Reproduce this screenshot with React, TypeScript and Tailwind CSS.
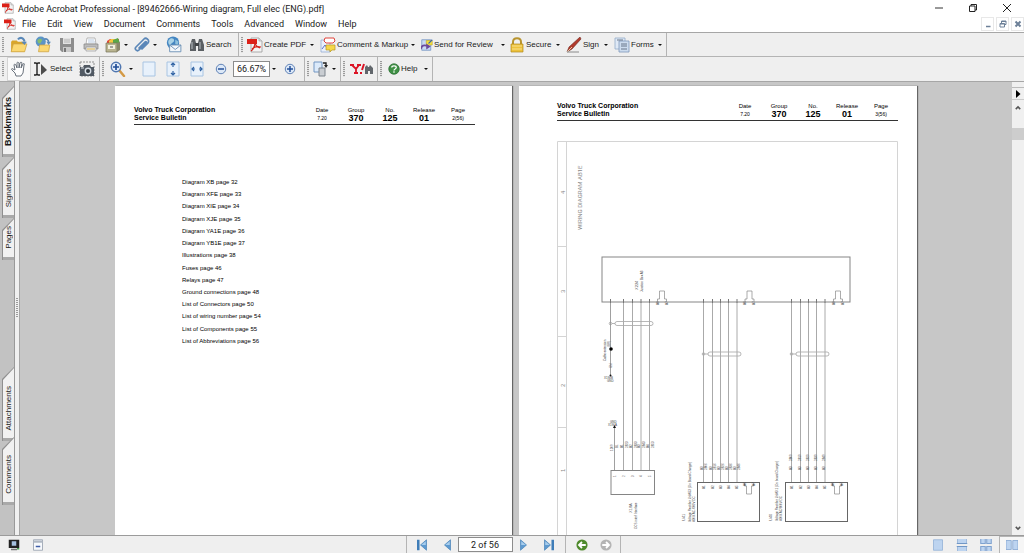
import type { ReactNode } from "react";

type IconProps = { className?: string; children: ReactNode };

function Icon({ className = "h-4 w-4", children }: IconProps) {
  return (
    <svg viewBox="0 0 16 16" className={`shrink-0 ${className}`} fill="none" aria-hidden="true">
      {children}
    </svg>
  );
}

/* ---------- icons ---------- */

function AcrobatIcon({ className = "h-4 w-4" }: { className?: string }) {
  return (
    <Icon className={className}>
      <path d="M4 1h8l3 3v11H4z" fill="#f4f4f4" stroke="#9a9a9a" strokeWidth="0.8" />
      <path d="M12 1v3h3" fill="#ddd" stroke="#9a9a9a" strokeWidth="0.6" />
      <path d="M0 2h10v5H0z" fill="#dc2018" />
      <path d="M4 14c2-1 4-5 4-9M8 5c0 3 2 5 5 6M5 12c2-2 5-3 9-2" stroke="#d3241c" strokeWidth="1.2" />
    </Icon>
  );
}

function OpenIcon() {
  return (
    <Icon className="h-[18px] w-[18px]">
      <path d="M1 5l1-1h4l1 1h6v9H1z" fill="#d9a62a" />
      <path d="M1 14L3 7h12l-2 7z" fill="#fbd872" stroke="#cfa544" strokeWidth="0.7" />
      <path d="M7 3c2-2 5-2 6 2" stroke="#5a88b8" strokeWidth="1.8" />
      <path d="M10 5h5l-2 3z" fill="#5a88b8" />
    </Icon>
  );
}

function OpenWebIcon() {
  return (
    <Icon className="h-[18px] w-[18px]">
      <circle cx="6" cy="5" r="4.5" fill="#5c94c6" />
      <path d="M3 4c1-2 3-2 4-1s-1 2-1 3-3 1-3-2z" fill="#86bd6f" />
      <path d="M4 14l1-6h9l-1 6z" fill="#fbd872" stroke="#cfa544" strokeWidth="0.7" />
      <path d="M9 3c2-1 4 0 4 3" stroke="#5a88b8" strokeWidth="1.5" />
      <path d="M11 5h4l-2 3z" fill="#5a88b8" />
    </Icon>
  );
}

function SaveIcon() {
  return (
    <Icon>
      <path d="M1 1h14v14H3l-2-2z" fill="#8d8d8d" />
      <path d="M4 1h8v6H4z" fill="#e2e2e2" />
      <path d="M5 3h6M5 5h6" stroke="#a9a9a9" strokeWidth="0.8" />
      <path d="M4 10h8v5H4z" fill="#c9c9c9" />
      <path d="M5 11h2v4H5z" fill="#777" />
    </Icon>
  );
}

function PrintIcon() {
  return (
    <Icon>
      <path d="M4 1h8l1 6H3z" fill="#fff" stroke="#9c9c9c" strokeWidth="0.7" />
      <path d="M5 3h6M5 5h7" stroke="#9ab3d1" strokeWidth="0.7" />
      <path d="M1 7h14v5H1z" fill="#bcbcbc" stroke="#858585" strokeWidth="0.7" />
      <path d="M3 10h10v4H3z" fill="#eee" stroke="#8b8b8b" strokeWidth="0.6" />
      <path d="M4 12h8" stroke="#e0b545" />
    </Icon>
  );
}

function OrganizerIcon() {
  return (
    <Icon>
      <path d="M2 4l3-2h9v4H2z" fill="#e1493a" />
      <path d="M4 4l2-2h6v4H4z" fill="#f3c83f" />
      <path d="M8 3l5-2 2 5H8z" fill="#5ba748" />
      <path d="M1 6h11v9H1z" fill="#b9b490" stroke="#77745a" strokeWidth="0.7" />
      <path d="M12 6l3-1v8l-3 2z" fill="#8b876b" />
      <path d="M3 8h7v4H3z" fill="#f2f0df" />
      <path d="M5 10h3" stroke="#555" />
    </Icon>
  );
}

function ClipIcon() {
  return (
    <Icon>
      <path
        d="M5 11l6-6c1-1 2 0 1 1l-7 7c-2 2-5-1-3-3l8-8c2-2 6 1 4 4l-6 6"
        stroke="#5b87b8"
        strokeWidth="1.7"
        strokeLinecap="round"
      />
    </Icon>
  );
}

function MailWebIcon() {
  return (
    <Icon className="h-[18px] w-[18px]">
      <circle cx="8" cy="6" r="5.5" fill="#4486c2" />
      <path d="M4 4c2-3 5-2 5 0S6 6 6 8 3 7 4 4z" fill="#a9d2e6" />
      <path d="M10 3l3 2-1 3-2-1z" fill="#8ec1dd" />
      <path d="M5 8h10v6H5z" fill="#f3f7fb" stroke="#6a8fb4" strokeWidth="0.8" />
      <path d="M5 8l5 4 5-4" stroke="#6a8fb4" strokeWidth="0.8" />
    </Icon>
  );
}

function BinocularsIcon() {
  return (
    <Icon>
      <path d="M3 2h3l1 4v8H1V8z" fill="#5b5f63" />
      <path d="M10 2h3l2 6v6H9V6z" fill="#5b5f63" />
      <path d="M6 6h4v3H6z" fill="#3f4245" />
      <path d="M3 5v7M11 5v7" stroke="#aab0b5" strokeWidth="1.2" />
    </Icon>
  );
}

function CommentIcon() {
  return (
    <Icon>
      <path d="M1 3h9v12H1z" fill="#e9f0fb" stroke="#8aa5d0" strokeWidth="0.7" />
      <path d="M2 12l3-4 2 3 2-2" stroke="#5a6fd0" />
      <path d="M5 1h9l1 3-2 2H6L4 4z" fill="#fff" stroke="#e0443c" />
      <path d="M6 8h9v5h-3l-2 2v-2H6z" fill="#f6d84a" stroke="#b99a23" strokeWidth="0.7" />
    </Icon>
  );
}

function ReviewIcon() {
  return (
    <Icon className="h-3 w-3">
      <path d="M1 1h12v14H1z" fill="#c9daf3" stroke="#6d8fc0" />
      <path d="M7 2h8v6h-4l-3 3V8H7z" fill="#f4df3c" stroke="#b39b21" strokeWidth="0.7" />
      <path d="M0 13c1-5 4-5 8-4" stroke="#6b4a9c" strokeWidth="2.4" />
      <path d="M7 6l6 4-6 4z" fill="#6b4a9c" />
      <path d="M15 1l-5 5" stroke="#3c68b1" strokeWidth="1.5" />
    </Icon>
  );
}

function LockIcon() {
  return (
    <Icon>
      <path d="M4 8V5c0-5 8-5 8 0v3" stroke="#b8942f" strokeWidth="2" />
      <path d="M2 7h12v8H2z" fill="#edc23c" stroke="#b28a1c" strokeWidth="0.7" />
      <path d="M3 9h10M3 12h10" stroke="#f9e08a" />
    </Icon>
  );
}

function PenIcon() {
  return (
    <Icon>
      <path d="M1 15l2-5L14 0l1 2-9 10z" fill="#b23a2c" stroke="#6f2a21" strokeWidth="0.6" />
      <path d="M1 15l5-5" stroke="#e7c9a5" />
      <path d="M1 15h12" stroke="#8a8a8a" />
    </Icon>
  );
}

function FormsIcon() {
  return (
    <Icon>
      <path d="M1 1h10v11H1z" fill="#dfe9f6" stroke="#93abc9" strokeWidth="0.8" />
      <path d="M5 4h10v11H5z" fill="#cddcee" stroke="#7d97ba" strokeWidth="0.8" />
      <path d="M3 3h6M7 7h6M7 9h6M7 12h6" stroke="#68768a" />
    </Icon>
  );
}

function HandIcon() {
  return (
    <Icon>
      <path
        d="M5 15l-1-3-3-3c-1-1 0-2 1-1l2 1-1-5c0-1 1-1 2 0l1 3V2c0-1 1-1 2 0v5l1-5c0-1 2-1 2 0l-1 5 2-4c1-1 2 0 1 1l-1 8-2 3z"
        fill="#fff"
        stroke="#59626d"
        strokeWidth="0.9"
      />
    </Icon>
  );
}

function SelectIcon() {
  return (
    <Icon>
      <path d="M1 2h2l1 1 1-1h2M4 3v10M1 14h2l1-1 1 1h2" stroke="#222" strokeWidth="1.4" />
      <path d="M8 3v11l6-5z" fill="#4d4d4d" />
    </Icon>
  );
}

function CameraIcon() {
  return (
    <Icon>
      <path d="M1 1h14v14H1z" stroke="#777" strokeDasharray="2 1" strokeWidth="0.8" />
      <path d="M1 6h3l1-2h6l1 2h3v9H1z" fill="#515963" />
      <circle cx="9" cy="10" r="3.4" fill="#d6dde4" />
      <circle cx="9" cy="10" r="2" fill="#2f373f" />
      <path d="M2 7h3" stroke="#dfe3e8" />
    </Icon>
  );
}

function ZoomIcon() {
  return (
    <Icon>
      <path d="M9 9l5 6" stroke="#d49a45" strokeWidth="2.5" strokeLinecap="round" />
      <circle cx="6" cy="6" r="4.7" fill="#e4eefb" stroke="#4f76b0" strokeWidth="1.5" />
      <path d="M6 3v6M3 6h6" stroke="#234f98" strokeWidth="1.7" />
    </Icon>
  );
}

function FitIcon({ kind }: { kind: "page" | "height" | "width" }) {
  return (
    <Icon>
      <path d="M2 1h12v14H2z" fill="#e8f1fb" stroke="#a8c4e2" />
      {kind === "height" ? <path d="M8 2v4M8 14v-4M6 4l2-2 2 2M6 12l2 2 2-2" stroke="#2f62a3" strokeWidth="1.2" /> : null}
      {kind === "width" ? <path d="M3 8h3M13 8h-3M5 6L3 8l2 2M11 6l2 2-2 2" stroke="#2f62a3" strokeWidth="1.2" /> : null}
    </Icon>
  );
}

function RoundIcon({ plus = false }: { plus?: boolean }) {
  return (
    <Icon className="h-3 w-3">
      <circle cx="8" cy="8" r="6.3" fill="#dce8f7" stroke="#5d80b4" strokeWidth="1.3" />
      <path d={plus ? "M8 4v8M4 8h8" : "M4 8h8"} stroke="#24509a" strokeWidth="2" />
    </Icon>
  );
}

function RotateIcon() {
  return (
    <Icon>
      <path d="M1 1h8v10H1z" fill="#dceafa" stroke="#7396c2" />
      <path d="M6 7h6v8H6z" fill="#c9cdd2" stroke="#7c848d" />
      <path d="M10 2h3v2" stroke="#222" strokeWidth="1.4" />
      <path d="M11 4h4l-2 3z" fill="#222" />
    </Icon>
  );
}

function YahooIcon() {
  return (
    <svg viewBox="0 0 24 12" className="h-3 w-6" fill="none" aria-hidden="true">
      <path d="M0 2h4M7 2h4M2 2l4 4 3-4M6 6v4M4 10h4" stroke="#db1426" strokeWidth="1.8" />
      <path d="M14 1l-2 6M11 9v2" stroke="#db1426" strokeWidth="2" />
      <path d="M15 4l2-2 1 2h1l1-2 3 3v6h-3V8h-2v3h-3z" fill="#62676c" />
    </svg>
  );
}

function HelpIcon() {
  return (
    <Icon className="h-3 w-3">
      <circle cx="8" cy="8" r="7" fill="#3f9145" stroke="#2a6d32" />
      <path d="M5 6c0-3 6-3 6 0 0 2-3 2-3 4M8 11v2" stroke="#fff" strokeWidth="1.7" />
    </Icon>
  );
}

function Caret() {
  return (
    <svg viewBox="0 0 4 2" className="h-0.5 w-1 shrink-0" aria-hidden="true">
      <path d="M0 0h4L2 2z" fill="#111" />
    </svg>
  );
}

/* ---------- toolbars ---------- */

function Grip() {
  return <span className="mx-0.5 h-4 w-0.5 shrink-0 bg-[repeating-linear-gradient(#9b9b9b_0_1px,#e4e4e4_1px_2px)]" />;
}

function Divider() {
  return <span className="h-full w-px shrink-0 bg-[#b4b4b4]" />;
}

type ToolProps = { label: string; icon: ReactNode; text?: boolean; caret?: boolean; className?: string };

function Tool({ label, icon, text = false, caret = false, className = "w-6" }: ToolProps) {
  return (
    <button
      type="button"
      aria-label={label}
      className={`flex h-full shrink-0 items-center whitespace-nowrap ${text || caret ? "gap-px" : "justify-center"} ${className}`}
    >
      {icon}
      {text ? <span>{label}</span> : null}
      {caret ? (
        <span className="ml-auto flex">
          <Caret />
        </span>
      ) : null}
    </button>
  );
}

function FileToolbar() {
  return (
    <div className="flex h-6 items-center border-b border-[#b4b4b4]">
      <div className="flex h-full items-center">
        <Grip />
        <Tool label="Open" icon={<OpenIcon />} className="ml-px w-6" />
        <Tool label="Open web page" icon={<OpenWebIcon />} />
        <Tool label="Save" icon={<SaveIcon />} />
        <Tool label="Print" icon={<PrintIcon />} />
        <Tool label="Organizer" icon={<OrganizerIcon />} caret className="ml-0.5 w-[23px]" />
        <Tool label="Attach" icon={<ClipIcon />} caret className="ml-1.5 w-[23px]" />
        <Tool label="Email" icon={<MailWebIcon />} className="ml-1 w-6" />
        <Tool label="Search" icon={<BinocularsIcon />} text className="ml-1 w-[49px]" />
      </div>
      <Divider />
      <Grip />
      <Tool label="Create PDF" icon={<AcrobatIcon />} text caret className="ml-0.5 w-[67px]" />
      <Tool label="Comment & Markup" icon={<CommentIcon />} text caret className="ml-1.5 w-[95px]" />
      <Tool label="Send for Review" icon={<ReviewIcon />} text caret className="ml-1.5 w-[84px]" />
      <Tool label="Secure" icon={<LockIcon />} text caret className="ml-1 w-[51px]" />
      <Tool label="Sign" icon={<PenIcon />} text caret className="ml-1.5 w-[42px]" />
      <Tool label="Forms" icon={<FormsIcon />} text caret className="ml-1.5 mr-1 w-12" />
      <Divider />
    </div>
  );
}

function ViewToolbar() {
  return (
    <div className="flex h-6 items-center">
      <Grip />
      <Tool label="Hand" icon={<HandIcon />} className="mx-px w-6 border border-[#d4d4d4] bg-[#f9f9f9]" />
      <Tool label="Select" icon={<SelectIcon />} text className="ml-px w-[42px]" />
      <Tool label="Snapshot" icon={<CameraIcon />} />
      <Divider />
      <Grip />
      <Tool label="Zoom in tool" icon={<ZoomIcon />} caret className="ml-1 mr-1 w-[23px]" />
      <Tool label="Actual size" icon={<FitIcon kind="page" />} />
      <Tool label="Fit page" icon={<FitIcon kind="height" />} />
      <Tool label="Fit width" icon={<FitIcon kind="width" />} />
      <Tool label="Zoom out" icon={<RoundIcon />} />
      <input
        aria-label="Zoom"
        defaultValue="66.67%"
        className="h-4 w-[37px] border border-[#8c8c8c] bg-white text-center font-['Roboto',sans-serif] text-[9px] outline-none"
      />
      <Tool label="Zoom presets" icon={<Caret />} className="w-2" />
      <Tool label="Zoom in" icon={<RoundIcon plus />} className="mr-0.5 w-6" />
      <Divider />
      <Grip />
      <Tool label="Rotate" icon={<RotateIcon />} caret className="ml-0.5 mr-1 w-[23px]" />
      <Divider />
      <Grip />
      <Tool label="Search Yahoo" icon={<YahooIcon />} className="w-[30px]" />
      <Divider />
      <Grip />
      <Tool label="Help" icon={<HelpIcon />} text caret className="ml-1 mr-1 w-10" />
      <Divider />
    </div>
  );
}

/* ---------- title + menu ---------- */

const MENUS = ["File", "Edit", "View", "Document", "Comments", "Tools", "Advanced", "Window", "Help"];

function TitleBar() {
  return (
    <header className="bg-white font-['Roboto',sans-serif]">
      <div className="flex h-4 items-center pl-0.5">
        <AcrobatIcon className="h-3 w-3" />
        <h1 className="ml-1 whitespace-nowrap pt-0.5 text-[9px] leading-4">
          Adobe Acrobat Professional - [89462666-Wiring diagram, Full elec (ENG).pdf]
        </h1>
        <div className="ml-auto flex">
          <button type="button" aria-label="Minimize" className="flex h-4 w-[34px] items-center justify-center">
            <Icon className="h-2 w-2">
              <path d="M0 8h16" stroke="#333" strokeWidth="2" />
            </Icon>
          </button>
          <button type="button" aria-label="Restore" className="flex h-4 w-[34px] items-center justify-center">
            <Icon className="h-2 w-2">
              <path d="M1 4h11v11H1zM4 4V1h11v11h-3" stroke="#222" strokeWidth="2" />
            </Icon>
          </button>
          <button type="button" aria-label="Close" className="flex h-4 w-[34px] items-center justify-center">
            <Icon className="h-2 w-2">
              <path d="M0 0l16 16M16 0L0 16" stroke="#222" strokeWidth="2" />
            </Icon>
          </button>
        </div>
      </div>
      <div className="flex h-4 items-center pl-1">
        <AcrobatIcon className="h-3 w-3" />
        <nav className="ml-1.5 flex gap-[11px] text-[9px] leading-4">
          {MENUS.map((menu) => (
            <button key={menu} type="button">
              {menu}
            </button>
          ))}
        </nav>
        <div className="ml-auto flex gap-0.5">
          <button type="button" aria-label="Minimize document" className="flex h-3.5 w-[13px] items-center justify-center border border-[#e8e8e8]">
            <Icon className="h-2 w-2">
              <path d="M4 13h9" stroke="#6d8098" strokeWidth="3" />
            </Icon>
          </button>
          <button type="button" aria-label="Restore document" className="flex h-3.5 w-[13px] items-center justify-center border border-[#e8e8e8]">
            <Icon className="h-2 w-2">
              <path d="M2 7h9v7H2zM5 6V2h9v7h-3M2 8h9M5 3h9" stroke="#6d8098" strokeWidth="2" />
            </Icon>
          </button>
          <button type="button" aria-label="Close document" className="flex h-3.5 w-[13px] items-center justify-center border border-[#e8e8e8]">
            <Icon className="h-2 w-2">
              <path d="M3 3l10 10M13 3L3 13" stroke="#6d8098" strokeWidth="4" />
            </Icon>
          </button>
        </div>
      </div>
    </header>
  );
}

/* ---------- side tabs ---------- */

type SideTabProps = { label: string; className: string };

function SideTab({ label, className }: SideTabProps) {
  return (
    <button
      type="button"
      className={`flex w-3 shrink-0 bg-[#8f8f8f] pl-px pt-px [clip-path:polygon(0_12px,100%_0,100%_100%,0_100%)] ${className}`}
    >
      <span className="flex h-full w-full flex-col items-center bg-[#f1f1f1] [clip-path:polygon(0_12px,100%_0,100%_100%,0_100%)]">
        <span className="mt-auto mb-2 rotate-180 leading-[11px] [writing-mode:vertical-rl]">{label}</span>
        <span className="h-[3px] w-full bg-[#a9a9a9]" />
      </span>
    </button>
  );
}

function SideTabs() {
  return (
    <aside className="flex w-3.5 shrink-0 flex-col border-t border-[#aaa] bg-[#c2c2c2] pl-0.5 pt-1 pb-[30px] text-[8px]">
      <SideTab label="Bookmarks" className="h-[71px] text-[9px] font-bold" />
      <SideTab label="Signatures" className="h-[61px]" />
      <SideTab label="Pages" className="h-[42px]" />
      <SideTab label="Attachments" className="mt-auto h-[74px]" />
      <SideTab label="Comments" className="-mt-1 h-[68px]" />
    </aside>
  );
}

/* ---------- document ---------- */

const CONTENTS = [
  "Diagram XB page 32",
  "Diagram XFE page 33",
  "Diagram XIE page 34",
  "Diagram XJE page 35",
  "Diagram YA1E page 36",
  "Diagram YB1E page 37",
  "Illustrations page 38",
  "Fuses page 46",
  "Relays page 47",
  "Ground connections page 48",
  "List of Connectors page 50",
  "List of wiring number page 54",
  "List of Components page 55",
  "List of Abbreviations page 56",
];

function BulletinHeader({ page }: { page: string }) {
  const columns = [
    { name: "Date", value: "7.20", big: false },
    { name: "Group", value: "370", big: true },
    { name: "No.", value: "125", big: true },
    { name: "Release", value: "01", big: true },
    { name: "Page", value: page, big: false },
  ];

  return (
    <div className="flex justify-between border-b border-[#333] pb-0.5">
      <div className="text-[7px] font-bold leading-2">
        Volvo Truck Corporation
        <br />
        Service Bulletin
      </div>
      <div className="flex">
        {columns.map((column) => (
          <div key={column.name} className="w-[34px] text-center">
            <div className="text-[6px] leading-2">{column.name}</div>
            <div className={column.big ? "text-[9px] font-bold leading-2" : "text-[5px] leading-2"}>{column.value}</div>
          </div>
        ))}
      </div>
    </div>
  );
}

type VTextProps = { x: number; y: number; size?: number; fill?: string; children: string };

// text that reads upwards, (x, y) is the start of the baseline
function VText({ x, y, size = 3, fill = "#777", children }: VTextProps) {
  return (
    <text transform={`translate(${x} ${y}) rotate(-90)`} fontSize={size} fill={fill}>
      {children}
    </text>
  );
}

function Plug({ x, y, down = false }: { x: number; y: number; down?: boolean }) {
  const d = down
    ? `M${x - 2} ${y}v3h2v8h5v-8h2v-3`
    : `M${x - 2} ${y}v-3h2v-8h5v8h2v3`;
  return (
    <g>
      <path d={d} stroke="#888" strokeWidth="0.7" />
      <VText x={x - 1} y={y + 3} fill="#333">A6</VText>
      <VText x={x + 8} y={y + 3} fill="#333">A7</VText>
    </g>
  );
}

function Shield({ x, y, width }: { x: number; y: number; width: number }) {
  return (
    <g stroke="#999" strokeWidth="0.7">
      <circle cx={x} cy={y} r="1.3" fill="#fff" />
      <path d={`M${x + 1.5} ${y}h3`} />
      <rect x={x + 4.5} y={y - 2} width={width} height="4" rx="2" />
    </g>
  );
}

const WIRES_A = [623.5, 632.5, 641, 649.5];
const WIRES_B = [703.5, 712.5, 720.5, 728.5, 737];
const WIRES_C = [791.5, 800.5, 808.5, 816.5, 825];

function WiringDiagram() {
  return (
    <svg
      viewBox="557 140 342 396"
      className="mt-5 h-[396px] w-[342px] font-['Liberation_Sans',sans-serif]"
      fill="none"
      role="img"
      aria-label="Wiring diagram AB1E"
    >
      <path d="M557.5 540V140.5h340V540M566.5 140v400M557 245.5h9M557 335.5h9M557 426.5h9" stroke="#d4d4d4" />
      <VText x={565} y={193} size={6} fill="#888">4</VText>
      <VText x={565} y={292} size={6} fill="#888">3</VText>
      <VText x={565} y={386} size={6} fill="#888">2</VText>
      <VText x={565} y={471} size={6} fill="#888">1</VText>
      <g className="font-['Roboto',sans-serif]">
        <VText x={582} y={229} size={6} fill="#888">WIRING DIAGRAM AB1E</VText>
      </g>

      {/* junction box */}
      <rect x="602" y="256" width="248" height="45" stroke="#858585" />
      <VText x={638} y={289} size={4} fill="#555">X224</VText>
      <VText x={643} y={291} fill="#333">Junction Box A3</VText>
      <Plug x={659.5} y={301} />
      <Plug x={747} y={301} />
      <Plug x={835.5} y={301} />

      <Shield x={610.5} y={322.5} width={38} />
      <Shield x={703.5} y={353} width={33} />
      <Shield x={791.5} y={353} width={33} />

      <path d="M610.5 301v73M614.5 426v43" stroke="#888" strokeWidth="0.8" />
      <circle cx="611" cy="348" r="1.8" fill="#000" />
      <circle cx="610.5" cy="374.5" r="1" fill="#111" />
      <path d="M613 427h3l-1.5-3z" fill="#111" />
      <VText x={605.5} y={360} fill="#333">Cable extension</VText>
      <VText x={610} y={346} fill="#555">(BR)</VText>
      <VText x={612} y={367} fill="#555">GN</VText>
      <text x="604" y="378" fontSize="3" fill="#444">X190B</text>
      <text x="607" y="381" fontSize="3" fill="#444">GND</text>
      <text x="610" y="422" fontSize="3" fill="#444">GND</text>
      <text x="608" y="425" fontSize="3" fill="#444">X190A</text>

      {WIRES_A.map((x, index) => (
        <g key={x}>
          <path d={`M${x} 301v168`} stroke="#aaa" />
          <VText x={x - 1} y={447} fill="#444">{`A${index + 1}`}</VText>
          <VText x={x + 4} y={447} fill="#444">{`28${index + 2}3`}</VText>
          <VText x={x + 1} y={476} fill="#555">{`${index + 2}`}</VText>
        </g>
      ))}
      {WIRES_B.map((x, index) => (
        <g key={x}>
          <path d={`M${x} 301v180`} stroke="#aaa" />
          <VText x={x - 1} y={469} fill="#444">A3</VText>
          <VText x={x + 3} y={469} fill="#444">{`28${index}6`}</VText>
          <VText x={x + 1} y={488} fill="#444">{`A${index + 1}`}</VText>
        </g>
      ))}
      {WIRES_C.map((x, index) => (
        <g key={x}>
          <path d={`M${x} 301v180`} stroke="#aaa" />
          <VText x={x} y={469} fill="#444">A3</VText>
          <VText x={x} y={460} fill="#444">{`28${index}9`}</VText>
          <VText x={x + 1} y={488} fill="#444">{`A${index + 1}`}</VText>
        </g>
      ))}
      {[610.5, ...WIRES_A, ...WIRES_B, ...WIRES_C].map((x) => (
        <path key={x} d={`M${x} 298v4`} stroke="#777" />
      ))}
      <VText x={613} y={450} fill="#444">1209</VText>
      <VText x={618} y={447} fill="#444">BL</VText>
      <VText x={616} y={476} fill="#555">1</VText>

      {/* connector X18A */}
      <rect x="611" y="469.5" width="43.5" height="24" stroke="#858585" />
      <VText x={632} y={512} size={4} fill="#666">X18A</VText>
      <VText x={637} y={528} fill="#444">OCS interf Interface</VText>

      {/* rectifier units */}
      <rect x="697.5" y="481.5" width="62" height="39" stroke="#666" />
      <Plug x={746.5} y={482} down />
      <VText x={685} y={520} size={4} fill="#555">U41</VText>
      <VText x={691} y={521} fill="#444">Voltage Rectifier UnMG3 (On Board Charger)</VText>
      <VText x={695} y={521} fill="#444">400V AC /600V DC</VText>
      <rect x="785.5" y="481.5" width="62" height="39" stroke="#666" />
      <Plug x={834.5} y={482} down />
      <VText x={772} y={520} size={4} fill="#555">U40</VText>
      <VText x={778} y={520} fill="#444">Voltage Rectifier UnM3.1 (On board Charger)</VText>
      <VText x={782} y={520} fill="#444">400V AC/600V DC</VText>
    </svg>
  );
}

function DocumentView() {
  return (
    <main className="flex min-w-0 flex-1 justify-center gap-[7px] overflow-hidden border-l border-t border-[#a6a6a6] bg-[#c7c7c7] pt-1 text-black">
      <section className="h-[561px] w-[397px] shrink-0 bg-white px-[19px] pt-5 shadow-[1px_0_1px_#666]">
        <div className="w-[341px]">
          <BulletinHeader page="2(56)" />
        </div>
        <ul className="ml-12 mt-[53px] flex h-[167px] flex-col justify-between text-[6px] leading-2">
          {CONTENTS.map((line) => (
            <li key={line}>{line}</li>
          ))}
        </ul>
      </section>
      <section className="h-[561px] w-[398px] shrink-0 bg-white pl-[38px] pr-4 pt-4 shadow-[1px_0_1px_#666]">
        <div className="w-[341px]">
          <BulletinHeader page="3(56)" />
        </div>
        <WiringDiagram />
      </section>
    </main>
  );
}

function ScrollBar() {
  return (
    <div className="flex w-3 shrink-0 flex-col items-center border-t border-[#a6a6a6] bg-[#f0f0f0]">
      <span className="h-1.5 w-full border-b border-[#bbb]" />
      <button type="button" aria-label="Pane menu" className="flex h-3 w-full items-center justify-center border-b border-[#ccc]">
        <Icon className="h-2 w-2">
          <path d="M4 0v16l9-8z" fill="#000" />
        </Icon>
      </button>
      <button type="button" aria-label="Scroll up" className="flex h-4 w-full items-center justify-center">
        <Icon className="h-1.5 w-1.5">
          <path d="M2 11l6-6 6 6" stroke="#555" strokeWidth="4" />
        </Icon>
      </button>
      <span className="mt-3 h-3 w-full bg-[#cdcdcd]" />
      <button type="button" aria-label="Scroll down" className="mt-auto flex h-3.5 w-full items-center justify-center">
        <Icon className="h-1.5 w-1.5">
          <path d="M2 5l6 6 6-6" stroke="#555" strokeWidth="4" />
        </Icon>
      </button>
    </div>
  );
}

/* ---------- status bar ---------- */

function NavIcon({ back = false, end = false }: { back?: boolean; end?: boolean }) {
  return (
    <Icon className={back ? "h-3 w-3 -scale-x-100" : "h-3 w-3"}>
      <path d="M2 1v14l8-7z" fill="#5e9ad0" stroke="#3b78b2" strokeWidth="0.8" />
      <path d="M3 3v5h6z" fill="#a8cdec" />
      {end ? <path d="M13 1v14" stroke="#3f7db8" strokeWidth="3.4" /> : null}
    </Icon>
  );
}

function HistoryIcon({ back = false }: { back?: boolean }) {
  return (
    <Icon className="h-3 w-3">
      <circle cx="8" cy="8" r="7.4" fill={back ? "#4f8a2c" : "#b4b4b4"} />
      <path d={back ? "M13 8H5M8 4L4 8l4 4" : "M3 8h8M8 4l4 4-4 4"} stroke="#fff" strokeWidth="2.4" />
    </Icon>
  );
}

function LayoutIcon({ kind }: { kind: "single" | "continuous" | "facingContinuous" | "facing" }) {
  return (
    <Icon className="h-3 w-3">
      {kind === "single" ? <path d="M2 1h12v14H2z" fill="#bdd4f0" stroke="#8eaed6" /> : null}
      {kind === "continuous" ? (
        <>
          <path d="M2 0v6h12V0M2 16v-6h12v6" fill="#bdd4f0" stroke="#8eaed6" />
          <path d="M1 6h14M1 10h14" stroke="#7197c6" strokeWidth="1.4" />
        </>
      ) : null}
      {kind === "facingContinuous" ? (
        <path d="M1 0v6h6V0M9 0v6h6V0M1 16v-6h6v6M9 16v-6h6v6" fill="#bdd4f0" stroke="#7fa2cf" strokeWidth="1.4" />
      ) : null}
      {kind === "facing" ? <path d="M0 2h7v12H0zM9 2h7v12H9z" fill="#bdd4f0" stroke="#7fa2cf" /> : null}
    </Icon>
  );
}

function StatusBar() {
  return (
    <footer className="flex h-[18px] items-center border-t border-[#9b9b9b] bg-[#efefef]">
      <div className="flex h-full flex-1 items-center pl-0.5">
        <Tool
          label="Full screen"
          icon={
            <Icon className="h-3 w-3">
              <path d="M1 1h14v11H1z" fill="#222" />
              <path d="M5 3h6v6H5z" fill="#a6c1e0" />
              <path d="M4 14h8" stroke="#777" strokeWidth="2" />
              <path d="M12 13h3" stroke="#45a049" strokeWidth="2" />
            </Icon>
          }
        />
        <Tool
          label="Hide toolbars"
          icon={
            <Icon className="h-3 w-3">
              <path d="M2 1h12v14H2z" fill="#f7f9fc" stroke="#8c97a6" />
              <path d="M2 2h12v3H2z" fill="#b0b8c4" />
              <path d="M5 10h6" stroke="#3f5da8" strokeWidth="2" />
            </Icon>
          }
        />
      </div>
      <div className="flex h-full items-center border-x border-[#b4b4b4] pl-[3px]">
        <Tool label="First page" icon={<NavIcon back end />} />
        <Tool label="Previous page" icon={<NavIcon back />} />
        <input
          aria-label="Page"
          defaultValue="2 of 56"
          className="h-[15px] w-[55px] border border-[#8c8c8c] bg-white text-center font-['Roboto',sans-serif] text-[9px] outline-none"
        />
        <Tool label="Next page" icon={<NavIcon />} />
        <Tool label="Last page" icon={<NavIcon end />} className="mr-1 w-6" />
        <Divider />
        <Tool label="Previous view" icon={<HistoryIcon back />} className="ml-1 w-6" />
        <Tool label="Next view" icon={<HistoryIcon />} className="mr-0.5 w-6" />
      </div>
      <div className="flex h-full flex-1 items-center justify-end">
        <Tool label="Single page" icon={<LayoutIcon kind="single" />} />
        <Tool label="Continuous" icon={<LayoutIcon kind="continuous" />} />
        <Tool label="Continuous facing" icon={<LayoutIcon kind="facingContinuous" />} />
        <Tool label="Facing" icon={<LayoutIcon kind="facing" />} className="ml-px w-[25px] border-l border-t border-[#b4b4b4] bg-[#f6f6f6]" />
      </div>
    </footer>
  );
}

export default function App() {
  return (
    <div className="flex h-screen flex-col overflow-hidden bg-[#efefef] font-['Liberation_Sans',sans-serif] text-[8px] text-[#1a1a1a]">
      <TitleBar />
      <div className="border-t border-[#a6a6a6]">
        <FileToolbar />
        <ViewToolbar />
      </div>
      <div className="flex min-h-0 flex-1">
        <SideTabs />
        <div className="flex w-[5px] shrink-0 items-center justify-center border-l border-[#999] bg-[#f0f0f0]">
          <span className="h-5 w-0.5 bg-[repeating-linear-gradient(#9b9b9b_0_1px,#f0f0f0_1px_2px)]" />
        </div>
        <DocumentView />
        <ScrollBar />
      </div>
      <StatusBar />
    </div>
  );
}
